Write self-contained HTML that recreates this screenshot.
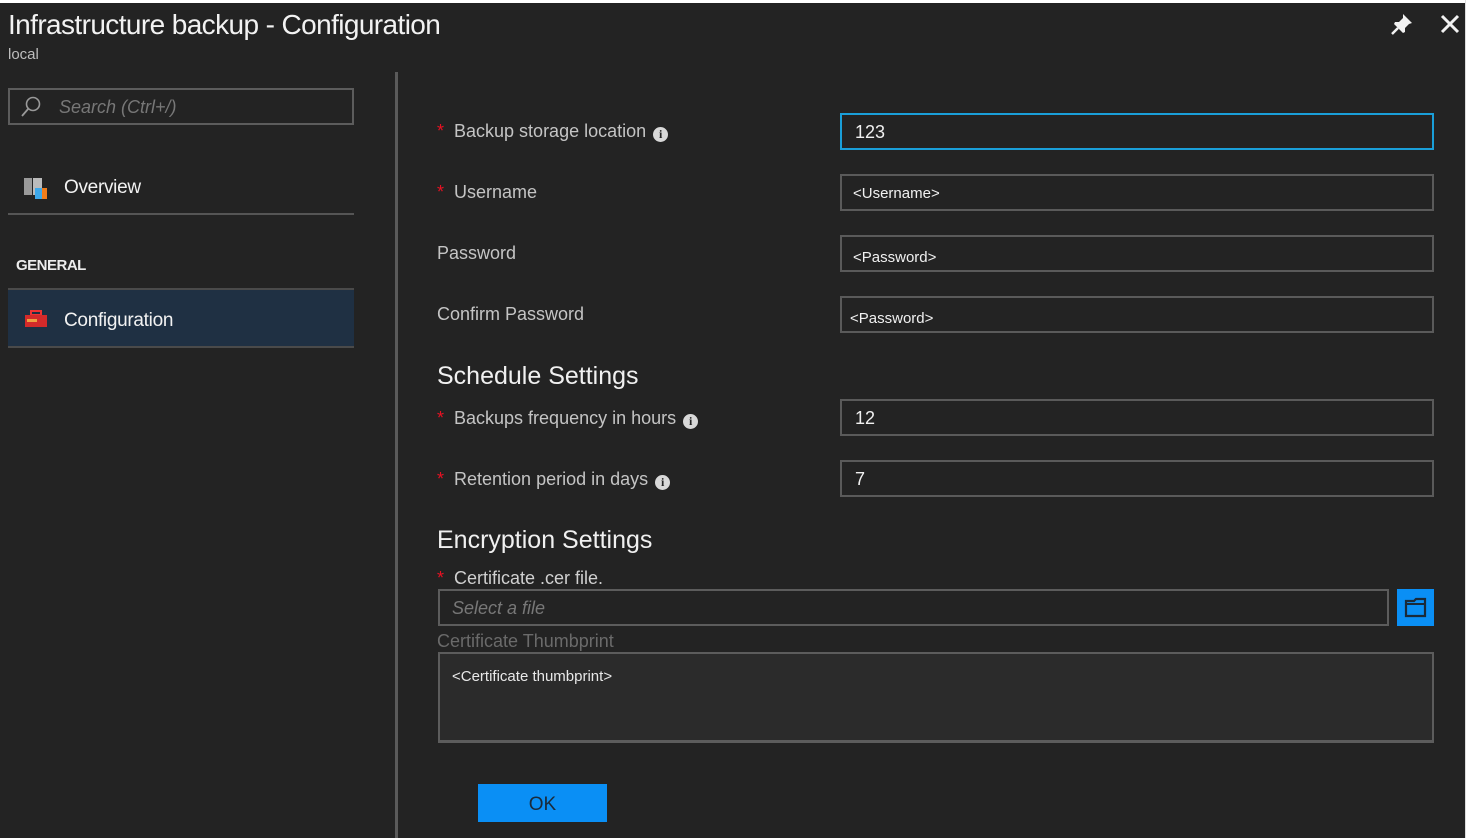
<!DOCTYPE html>
<html><head><meta charset="utf-8"><style>
*{margin:0;padding:0;box-sizing:border-box}
html,body{width:1466px;height:838px;overflow:hidden}
body{background:#232323;font-family:"Liberation Sans",sans-serif;color:#e0e0e0;position:relative}
.a{position:absolute}
.lbl{position:absolute;font-size:18px;color:#c4c4c4;white-space:nowrap}
.st{color:#e81123;margin-right:10px}
.inp{position:absolute;left:840px;width:594px;height:37px;border:2px solid #5a5a5a;background:#232323;font-size:18px;color:#f0f0f0;padding:7px 13px}
.sm{font-size:15px;padding:10px 11px}
.info{display:inline-block;width:15px;height:15px;border-radius:50%;background:#d8d8d8;color:#232323;font-size:12px;font-weight:bold;text-align:center;line-height:15px;margin-left:7px;vertical-align:-1px;font-family:"Liberation Serif",serif}
h2{position:absolute;font-weight:normal;font-size:25px;color:#f0f0f0;left:437px;white-space:nowrap}
</style></head><body>
<div class="a" style="left:0;top:0;width:1466px;height:3px;background:#fff"></div>
<div class="a" style="right:0;top:0;width:1px;height:838px;background:#ddd"></div>
<div class="a" style="left:8px;top:9px;font-size:28px;letter-spacing:-0.6px;color:#f2f2f2;white-space:nowrap">Infrastructure backup - Configuration</div>
<div class="a" style="left:8px;top:46px;font-size:15px;color:#bdbdbd">local</div>
<svg class="a" style="left:1390px;top:12px" width="24" height="24" viewBox="0 0 24 24"><path d="M13 2l9 9-3 1-4 4 0 4-2 1-9-9 1-2h4l4-4z" fill="#f2f2f2"/><path d="M8 16l-6 6" stroke="#f2f2f2" stroke-width="2.5"/></svg>
<svg class="a" style="left:1440px;top:14px" width="20" height="20" viewBox="0 0 20 20"><path d="M2 2L18 18M18 2L2 18" stroke="#f2f2f2" stroke-width="3"/></svg>

<div class="a" style="left:8px;top:88px;width:346px;height:37px;border:2px solid #5c5c5c"></div>
<svg class="a" style="left:19px;top:95px" width="24" height="24" viewBox="0 0 24 24"><circle cx="14" cy="9" r="6.5" fill="none" stroke="#999" stroke-width="1.6"/><path d="M9.5 13.5L3 21" stroke="#999" stroke-width="1.8"/></svg>
<div class="a" style="left:59px;top:97px;font-size:18px;color:#777;font-style:italic">Search (Ctrl+/)</div>

<svg class="a" style="left:23px;top:176px" width="26" height="26" viewBox="0 0 26 26"><rect x="1" y="2" width="8" height="17" fill="#9a9a9a"/><rect x="10" y="2" width="9" height="17" fill="#bbb"/><rect x="12" y="12" width="9" height="11" fill="#3da8ea"/><rect x="19" y="12" width="5" height="11" fill="#f07d1b"/></svg>
<div class="a" style="left:64px;top:177px;font-size:19px;letter-spacing:-0.3px;color:#f2f2f2">Overview</div>
<div class="a" style="left:8px;top:213px;width:346px;height:2px;background:#555"></div>
<div class="a" style="left:16px;top:257px;font-size:15px;font-weight:bold;letter-spacing:-0.5px;color:#ececec">GENERAL</div>
<div class="a" style="left:8px;top:288px;width:346px;height:60px;background:#1f3043;border-top:2px solid #4a4a4a;border-bottom:2px solid #4a4a4a"></div>
<svg class="a" style="left:24px;top:309px" width="24" height="20" viewBox="0 0 24 20"><rect x="7" y="2" width="10" height="4" fill="none" stroke="#e33" stroke-width="2"/><rect x="1" y="6" width="22" height="12" fill="#d42a2a"/><rect x="3" y="10" width="10" height="3" fill="#f0a040"/></svg>
<div class="a" style="left:64px;top:310px;font-size:19px;letter-spacing:-0.3px;color:#f2f2f2">Configuration</div>

<div class="a" style="left:395px;top:72px;width:3px;height:766px;background:#5a5a5a"></div>

<div class="lbl" style="left:437px;top:121px"><span class="st">*</span>Backup storage location<span class="info">i</span></div>
<div class="inp" style="top:113px;border-color:#1a9fd9">123</div>
<div class="lbl" style="left:437px;top:182px"><span class="st">*</span>Username</div>
<div class="inp sm" style="top:174px;padding-top:9px">&lt;Username&gt;</div>
<div class="lbl" style="left:437px;top:243px">Password</div>
<div class="inp sm" style="top:235px;padding-top:12px">&lt;Password&gt;</div>
<div class="lbl" style="left:437px;top:304px">Confirm Password</div>
<div class="inp sm" style="top:296px;padding-top:12px;padding-left:8px">&lt;Password&gt;</div>

<h2 style="top:362px">Schedule Settings</h2>
<div class="lbl" style="left:437px;top:408px"><span class="st">*</span>Backups frequency in hours<span class="info">i</span></div>
<div class="inp" style="top:399px">12</div>
<div class="lbl" style="left:437px;top:469px"><span class="st">*</span>Retention period in days<span class="info">i</span></div>
<div class="inp" style="top:460px">7</div>

<h2 style="top:526px">Encryption Settings</h2>
<div class="lbl" style="left:437px;top:568px;color:#d0d0d0"><span class="st">*</span>Certificate .cer file.</div>
<div class="a" style="left:438px;top:589px;width:951px;height:37px;border:2px solid #5c5c5c;font-size:18px;color:#777;font-style:italic;padding:7px 12px">Select a file</div>
<div class="a" style="left:1397px;top:589px;width:37px;height:37px;background:#0a8ff5"></div>
<svg class="a" style="left:1404px;top:596px" width="24" height="22" viewBox="0 0 24 22"><path d="M2 5h8l2-2h9v17H2z" fill="#0a8ff5" stroke="#1a2a3a" stroke-width="2.2"/><path d="M2 8h19" stroke="#1a2a3a" stroke-width="2"/></svg>
<div class="lbl" style="left:437px;top:631px;color:#6a6a6a">Certificate Thumbprint</div>
<div class="a" style="left:438px;top:652px;width:996px;height:91px;border:2px solid #5c5c5c;border-bottom-width:3px;background:#2b2b2b;font-size:15px;color:#e8e8e8;padding:14px 12px">&lt;Certificate thumbprint&gt;</div>

<div class="a" style="left:478px;top:784px;width:129px;height:38px;background:#0a8ff5;color:#1a2a3a;font-size:19px;text-align:center;line-height:42px">OK</div>
</body></html>
